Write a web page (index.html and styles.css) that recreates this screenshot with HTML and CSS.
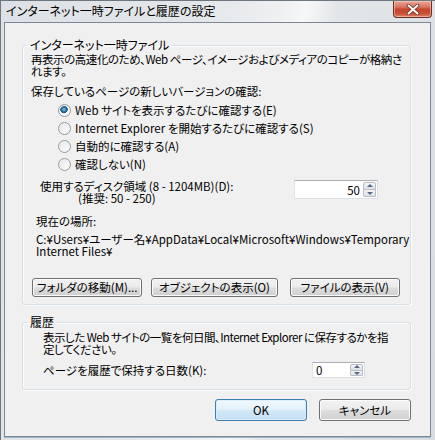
FILE: index.html
```html
<!DOCTYPE html>
<html lang="ja">
<head>
<meta charset="utf-8">
<title>インターネット一時ファイルと履歴の設定</title>
<link rel="stylesheet" href="styles.css">
</head>
<body>
<div class="window">
  <div class="titlebar">
    <span class="title">インターネット一時ファイルと履歴の設定</span>
    <div class="close">
      <svg width="14" height="11" viewBox="0 0 14 11">
        <path d="M2.5 1.5 L11.5 9.5 M11.5 1.5 L2.5 9.5" stroke="#6b2a20" stroke-width="3.6" stroke-linecap="round"/>
        <path d="M2.5 1.5 L11.5 9.5 M11.5 1.5 L2.5 9.5" stroke="#ffffff" stroke-width="2" stroke-linecap="round"/>
      </svg>
    </div>
  </div>
  <div class="client">
    <fieldset class="group group-temp">
      <legend>インターネット一時ファイル</legend>
      <p class="desc">再表示の高速化のため、Web ページ、イメージおよびメディアのコピーが格納さ<br>れます。</p>
      <p class="check-title">保存しているページの新しいバージョンの確認:</p>
      <ul class="radios">
        <li class="radio"><span class="radio-box checked"></span>Web サイトを表示するたびに確認する(E)</li>
        <li class="radio"><span class="radio-box"></span>Internet Explorer を開始するたびに確認する(S)</li>
        <li class="radio"><span class="radio-box"></span>自動的に確認する(A)</li>
        <li class="radio"><span class="radio-box"></span>確認しない(N)</li>
      </ul>
      <div class="disk-row">
        <div class="disk-label">
          <div>使用するディスク領域 (8 - 1204MB)(D):</div>
          <div class="rec">(推奨: 50 - 250)</div>
        </div>
        <div class="spin spin-disk">
          <span class="spin-value">50</span>
          <div class="spin-btns"><span class="spin-up"></span><span class="spin-down"></span></div>
        </div>
      </div>
      <p class="loc-title">現在の場所:</p>
      <p class="loc-path">C:¥Users¥ユーザー名¥AppData¥Local¥Microsoft¥Windows¥Temporary<br>Internet Files¥</p>
      <div class="btn-row">
        <button class="btn btn-move">フォルダの移動(M)...</button>
        <button class="btn btn-objects">オブジェクトの表示(O)</button>
        <button class="btn btn-files">ファイルの表示(V)</button>
      </div>
    </fieldset>
    <fieldset class="group group-history">
      <legend>履歴</legend>
      <p class="hist-desc">表示した Web サイトの一覧を何日間、Internet Explorer に保存するかを指<br>定してください。</p>
      <div class="days-row">
        <span class="days-label">ページを履歴で保持する日数(K):</span>
        <div class="spin spin-days">
          <span class="spin-value">0</span>
          <div class="spin-btns"><span class="spin-up"></span><span class="spin-down"></span></div>
        </div>
      </div>
    </fieldset>
    <div class="actions">
      <button class="btn btn-ok">OK</button>
      <button class="btn btn-cancel">キャンセル</button>
    </div>
  </div>
</div>
</body>
</html>
```

FILE: styles.css
```css
* { box-sizing: border-box; }
html, body { margin: 0; padding: 0; }
body {
  width: 435px;
  height: 440px;
  overflow: hidden;
  background: #dfe3e7;
  font-family: "Noto Sans CJK JP", "Noto Sans", sans-serif;
  font-size: 11.5px;
  color: #000;
  font-feature-settings: "palt";
}
p { margin: 0; }
.window {
  width: 435px;
  height: 440px;
  display: flex;
  flex-direction: column;
  border-top: 1px solid #6e7680;
  border-left: 1px solid #6e7680;
  padding: 0 4px 3px 3px;
  background: linear-gradient(100deg, #dde1e5 0%, #e4e7ea 40%, #eef0f2 55%, #f6f7f8 60%, #e3e6e9 66%, #d9dde1 100%);
}
.titlebar {
  height: 21px;
  display: flex;
  align-items: flex-start;
  justify-content: space-between;
  flex: none;
}
.title {
  margin: 3px 0 0 2px;
  font-size: 12px;
  line-height: 14px;
  white-space: nowrap;
  color: #000;
}
.close {
  width: 39px;
  height: 17px;
  margin-right: -1px;
  border: 1px solid #6e2d22;
  border-top: none;
  border-radius: 0 0 4px 4px;
  background: linear-gradient(180deg, #eba697 0%, #d97a66 35%, #c6442c 52%, #c85037 78%, #dc846a 100%);
  box-shadow: inset 0 0 0 1px rgba(255,220,210,0.5);
  display: flex;
  align-items: center;
  justify-content: center;
}
.client {
  flex: 1;
  background: #f0f0f0;
  border: 1px solid #7d8894;
  padding: 15px 19px 0 17px;
  display: flex;
  flex-direction: column;
  background-clip: padding-box;
  box-shadow: 0 1px 0 #9fb7ca;
}
.group {
  margin: 0;
  border: 1px solid #d5dfe5;
  border-radius: 3px;
  box-shadow: inset 1px 1px 0 #fcfcfc, 1px 1px 0 #fcfcfc;
  padding: 0 10px 7px 8px;
  min-width: 0;
}
.group legend {
  padding: 0 2px;
  margin-left: -3px;
  font-size: 12px;
  line-height: 14px;
  white-space: nowrap;
}
.desc, .check-title, .loc-title, .loc-path, .hist-desc {
  line-height: 12px;
  white-space: nowrap;
}
.desc { margin-top: 1px; letter-spacing: -0.45px; }
.check-title { margin-top: 8px; }
.radios {
  list-style: none;
  margin: 4px 0 0;
  padding: 0 0 0 27px;
}
.radio {
  height: 18px;
  display: flex;
  align-items: center;
  gap: 4px;
  white-space: nowrap;
}
.radio-box {
  width: 13px;
  height: 13px;
  flex: none;
  border-radius: 50%;
  border: 1px solid #979a9f;
  background: radial-gradient(circle at 70% 70%, #fbfbfb 0%, #ececec 60%, #dcdcdc 100%);
  box-shadow: inset 0 0 0 1px #f4f4f4;
}
.radio-box.checked {
  background:
    radial-gradient(circle at 45% 40%, #9fd6ef 0px, #3b8cc2 1.5px, #1d4f7c 3.5px, rgba(29,79,124,0) 4px),
    radial-gradient(circle at 70% 70%, #fbfbfb 0%, #ececec 60%, #dcdcdc 100%);
}
.disk-row {
  margin-top: 7px;
  display: flex;
  justify-content: space-between;
  align-items: flex-start;
  padding-left: 9px;
  padding-right: 22px;
}
.disk-label { line-height: 12px; white-space: nowrap; }
.rec { padding-left: 38px; }
.spin {
  display: flex;
  align-items: stretch;
  background: #fff;
  border: 1px solid #dbdfe6;
  border-top-color: #abadb3;
  border-left-color: #e2e3ea;
  padding: 1px;
}
.spin-disk { width: 84px; height: 19px; }
.spin-days { width: 53px; height: 16px; }
.spin-value {
  flex: 1;
  line-height: 15px;
  padding: 0 2px;
}
.spin-disk .spin-value { text-align: right; padding-right: 3px; line-height: 16px; }
.spin-days .spin-value { text-align: left; line-height: 13px; padding-left: 2px; }
.spin-btns {
  width: 13px;
  display: flex;
  flex-direction: column;
}
.spin-up, .spin-down {
  flex: 1;
  position: relative;
  border: 1px solid #b8bcc2;
  background: linear-gradient(180deg, #f4f5f7, #dde1e6);
}
.spin-up { border-radius: 2px 2px 0 0; }
.spin-down { border-radius: 0 0 2px 2px; border-top: none; }
.spin-up::after, .spin-down::after {
  content: "";
  position: absolute;
  left: 50%;
  top: 50%;
  margin-left: -3px;
  border-left: 3px solid transparent;
  border-right: 3px solid transparent;
}
.spin-up::after { margin-top: -2px; border-bottom: 3px solid #56678a; }
.spin-down::after { margin-top: -1px; border-top: 3px solid #56678a; }
.loc-title { margin-top: 11px; padding-left: 5px; }
.loc-path { margin-top: 6px; padding-left: 5px; }
.btn-row {
  margin-top: 21px;
  display: flex;
  padding-left: 1px;
}
.btn {
  font-family: inherit;
  font-size: 11.5px;
  font-feature-settings: "palt";
  color: #000;
  padding: 0;
  border: 1px solid #707070;
  border-radius: 3px;
  background: linear-gradient(180deg, #f2f2f2 0%, #ebebeb 48%, #dddddd 52%, #cfcfcf 100%);
  box-shadow: inset 0 0 0 1px #fbfbfb;
  white-space: nowrap;
}
.btn-row .btn { height: 19px; line-height: 15px; }
.btn-move { width: 111px; }
.btn-objects { width: 127px; margin-left: 9px; }
.btn-files { width: 111px; margin-left: 12px; }
.group-history {
  margin-top: 10px;
  padding-bottom: 11px;
}
.hist-desc { margin-top: 2px; padding-left: 12px; letter-spacing: -0.5px; }
.days-row {
  margin-top: 7px;
  display: flex;
  align-items: center;
  justify-content: space-between;
  padding-left: 12px;
  padding-right: 35px;
}
.actions {
  margin-top: 9px;
  display: flex;
  justify-content: flex-end;
  gap: 12px;
}
.actions .btn { width: 92px; height: 22px; line-height: 18px; }
.btn-ok {
  border-color: #3c7fb1;
  background: linear-gradient(180deg, #f1f8fd 0%, #e3f1fb 48%, #d2e8f7 52%, #c4e0f3 100%);
  box-shadow: inset 0 0 0 1px #d8eefa;
}
```
